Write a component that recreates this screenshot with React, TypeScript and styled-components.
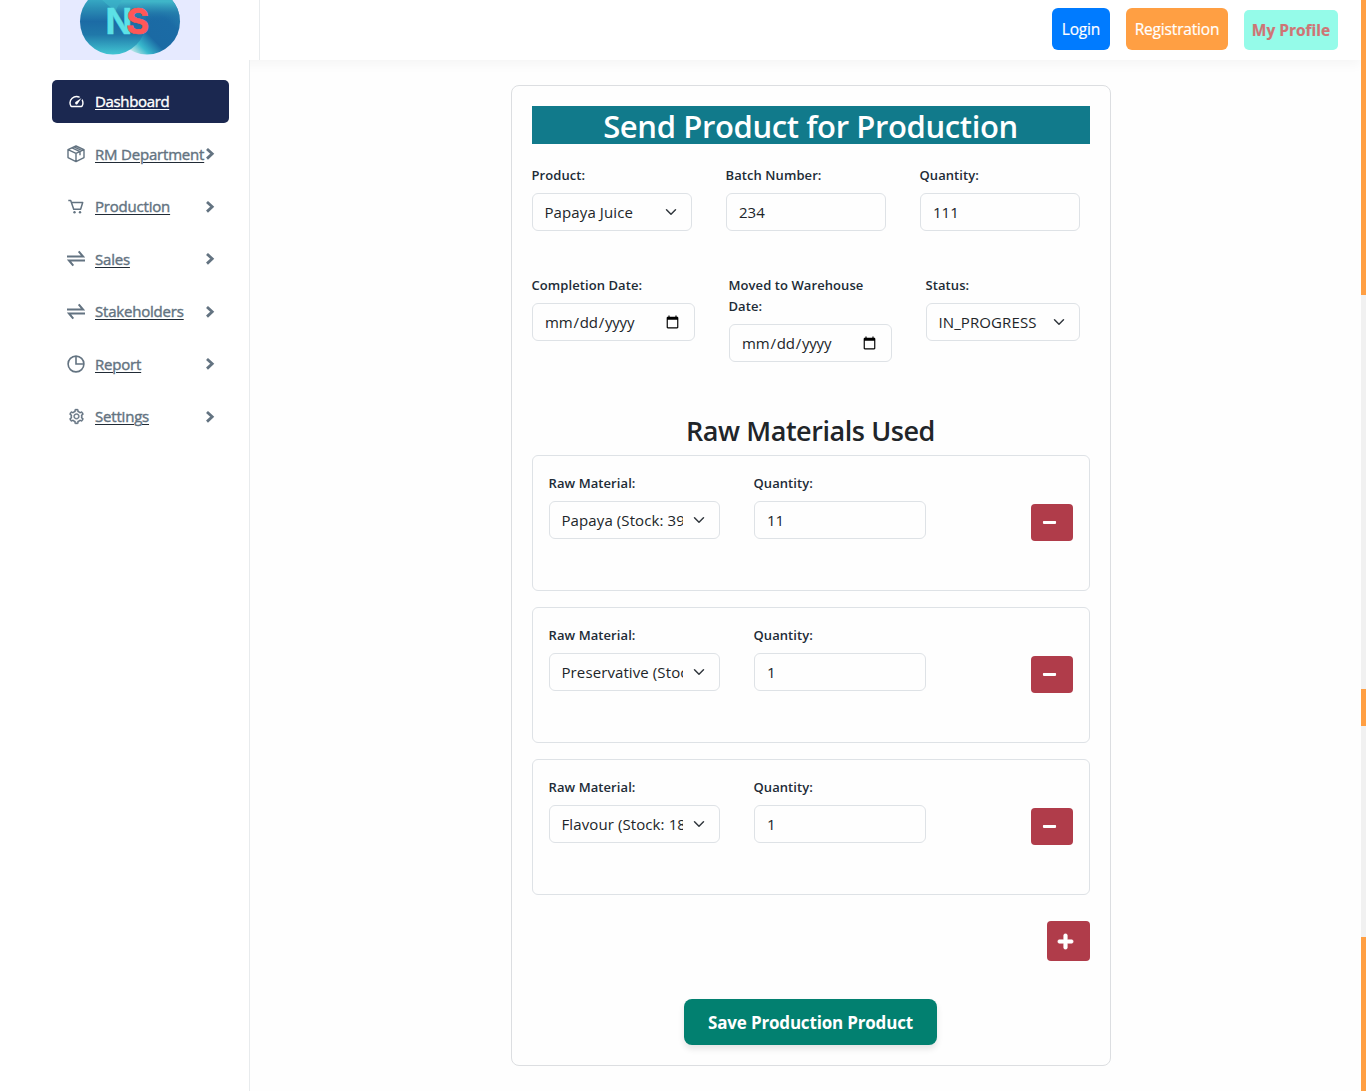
import React from "react";
import styled, { createGlobalStyle } from "styled-components";
import { MdOutlineSpeed } from "react-icons/md";
import { AiOutlineSetting } from "react-icons/ai";
import { FaMinus, FaPlus } from "react-icons/fa";

const GlobalStyle = createGlobalStyle`
  *, *::before, *::after { box-sizing: border-box; }
  body { margin: 0; background: #fefefe; color: #212529; font: 16px/1.5 "Open Sans", "Noto Sans", sans-serif; overflow: hidden; }
  h2, h3 { margin: 0; }
  button, input, select { font-family: inherit; }
`;

const Page = styled.div`display: grid; grid-template-columns: 1fr 5px; height: 1091px;`;
const Shell = styled.div`display: grid; grid-template-rows: 60px 1fr; min-width: 0;`;
const Header = styled.header`
  display: flex; background: #fff; box-shadow: 0 4px 12px rgba(0, 0, 0, 0.04);
`;
const LogoArea = styled.div`width: 260px; padding-left: 60px; border-right: 1px solid #e8ebed; overflow: hidden;`;
const Logo = styled.svg`display: block; background: #e6eaff;`;
const HeaderActions = styled.div`flex: 1; display: flex; justify-content: flex-end; padding: 8px 23px 10px 0;`;
const HeaderButton = styled.button<{ $bg: string; $w: number }>`
  width: ${(p) => p.$w}px; margin-right: 16px; padding: 0; border: 0; border-radius: 6px; background: ${(p) => p.$bg};
  color: #fff; font-size: 15.5px; letter-spacing: -0.18px; white-space: nowrap; -webkit-text-stroke: 0.2px currentColor;
`;
const ProfileButton = styled(HeaderButton)`
  margin: 2px 0 0; border-radius: 5px; color: #cf7475; font-weight: 700; letter-spacing: 0;
`;
const Body = styled.div`display: grid; grid-template-columns: 250px 1fr;`;
const Sidebar = styled.aside`
  position: relative; background: #fff; border-right: 1px solid #e8ebed; padding: 20px 20px 0 52px;
`;
const Menu = styled.nav`display: flex; flex-direction: column; gap: 9.5px;`;
const MenuLink = styled.a<{ $active?: boolean }>`
  display: flex; align-items: center; height: 43px; padding: 0 14.500px 0 15px; border-radius: 5px;
  color: ${(p) => (p.$active ? "#fff" : "#637381")}; background: ${(p) => (p.$active ? "#1b2850" : "transparent")};
  font-size: 15px; letter-spacing: ${(p) => (p.$active ? "-0.35px" : "-0.2px")};
  & > svg { flex: none; }
`;
const MenuIcon = styled.span`display: grid; place-items: center; flex: none; width: 18px; height: 18px; margin-right: 10px;`;
const MenuText = styled.span<{ $active?: boolean }>`
  flex: 1; min-width: 0; white-space: nowrap; text-decoration: underline; text-decoration-color: ${(p) => (p.$active ? "#fff" : "#212b36")};
  text-underline-offset: 2px; text-decoration-thickness: 1px;
  -webkit-text-stroke: 0.4px currentColor;
`;
const Main = styled.main`padding: 25px 0 0 261px;`;
const Card = styled.form`
  width: 600px; height: 981px; padding: 20px; border: 1px solid #dcdee1; border-radius: 8px;
  display: flex; flex-direction: column;
`;
const Title = styled.h2`
  height: 38px; padding-right: 1px; background: #117a8b; color: #fff; text-align: center; font-size: 31px; line-height: 41px;
  font-weight: 600; letter-spacing: -0.38px;
`;
const FieldRow = styled.div<{ $cols: string; $h: number; $top?: number }>`
  display: grid; grid-template-columns: ${(p) => p.$cols}; column-gap: 34px; align-items: start;
  height: ${(p) => p.$h}px; padding-top: ${(p) => p.$top ?? 0}px;
`;
const Field = styled.label`display: flex; flex-direction: column; gap: 7px; min-width: 0; padding-top: 1px;`;
const LabelText = styled.span`font-size: 13px; line-height: 21px; font-weight: 600; color: #212b36; letter-spacing: 0.08px; margin-left: -0.5px;`;
const Input = styled.input`
  width: 100%; height: 38px; padding: 6px 12px; border: 1px solid #dee2e6; border-radius: 6px; background: transparent;
  color: #212529; font-size: 15px; line-height: 24px; letter-spacing: 0;
  &[type="date"] { padding-left: 11px; padding-right: 12px; letter-spacing: -0.2px; }
`;
const Select = styled.select`
  width: 100%; height: 38px; padding: 6px 36px 6px 11.5px; border: 1px solid #dee2e6; border-radius: 6px; appearance: none;
  color: #212529; font-size: 15px; line-height: 24px; letter-spacing: 0.1px;
  background: transparent url("data:image/svg+xml,%3csvg xmlns='http://www.w3.org/2000/svg' viewBox='0 0 16 16'%3e%3cpath fill='none' stroke='%23343a40' stroke-linecap='round' stroke-linejoin='round' stroke-width='2' d='m2 5 6 6 6-6'/%3e%3c/svg%3e") no-repeat right 12px center / 16px 12px;
`;
const Subtitle = styled.h3`
  height: 42px; padding-right: 1px; line-height: 36px; text-align: center; font-size: 27px; font-weight: 600; letter-spacing: -0.44px;
`;
const Materials = styled.div`display: flex; flex-direction: column; gap: 16px;`;
const Material = styled.div`
  display: grid; grid-template-columns: 171px 172px 1fr; column-gap: 34px; align-items: start;
  height: 136px; padding: 16px; border: 1px solid #dee2e6; border-radius: 6px;
`;
const IconButton = styled.button<{ $w: number; $h: number }>`
  display: flex; align-items: center; align-self: flex-end; width: ${(p) => p.$w}px; height: ${(p) => p.$h}px;
  padding: 0 0 0 11px; border: 0; border-radius: 4px; background: #b03c4a; color: #fff;
`;
const RemoveButton = styled(IconButton)`align-self: start; justify-self: end; margin-top: 32px;`;
const AddButton = styled(IconButton)`margin-top: 26px; padding-left: 10px;`;
const SaveButton = styled.button`
  width: 253px; height: 46px; margin: 38px 0 0 152px; border: 0; border-radius: 8px; background: #028070; color: #fff;
  font-size: 17px; font-weight: 700; letter-spacing: -0.18px; box-shadow: 0 4px 6px rgba(0, 0, 0, 0.1); white-space: nowrap; padding: 0;
`;
const Track = styled.div`display: grid; grid-template-rows: 295px 394px 37px 211px 1fr; background: #f1f1f1;`;
const Thumb = styled.div<{ $row: number }>`grid-row: ${(p) => p.$row}; background: #ff9f43;`;

const PieIcon = () => (
  <svg width="18" height="18" viewBox="0 0 18 18" fill="none" stroke="currentColor" strokeWidth="1.6">
    <circle cx="9" cy="9" r="7.9" /><path d="M9 1v8h8" />
  </svg>
);
const BoxIcon = () => (
  <svg width="18" height="18" viewBox="0 0 18 18" fill="none" stroke="currentColor" strokeWidth="1.4" strokeLinejoin="round">
    <path d="M9 1 17 4.600v8L9 16.600 1 12.600v-8zM1 4.600l8 3.800 8-3.800M9 8.400v8.200M5 2.900l8 3.700v3.600M7 1.900l8 3.700" />
  </svg>
);
const CartIcon = () => (
  <svg width="18" height="18" viewBox="0 0 18 18" fill="none" stroke="currentColor" strokeWidth="1.5" strokeLinejoin="round">
    <path d="M1.300 2.600H3.700L6.700 11.200H14.200M4.400 4.500H15.700L13.700 11" />
    <circle cx="7.500" cy="14.300" r="1.200" fill="currentColor" stroke="none" />
    <circle cx="13" cy="14.300" r="1.200" fill="currentColor" stroke="none" />
  </svg>
);
const SwapIcon = () => (
  <svg width="18" height="18" viewBox="0 0 18 18" fill="none" stroke="currentColor" strokeWidth="2">
    <path d="M0 6.500H16L11.700 1.300M18 10.500H2L6.300 15.700" />
  </svg>
);
const Chevron = () => (
  <svg width="10" height="12" viewBox="0 0 10 12" fill="none" stroke="currentColor" strokeWidth="2.8">
    <path d="M2 1 7.200 5.800 2 10.600" />
  </svg>
);

const menu = [
  { text: "Dashboard", icon: <MdOutlineSpeed size={17} />, active: true },
  { text: "RM Department", icon: <BoxIcon /> },
  { text: "Production", icon: <CartIcon /> },
  { text: "Sales", icon: <SwapIcon /> },
  { text: "Stakeholders", icon: <SwapIcon /> },
  { text: "Report", icon: <PieIcon /> },
  { text: "Settings", icon: <AiOutlineSetting size={17} stroke="currentColor" strokeWidth={22} /> },
];

const materials = [
  { name: "Papaya (Stock: 39)", qty: "11" },
  { name: "Preservative (Stock: 9)", qty: "1" },
  { name: "Flavour (Stock: 18)", qty: "1" },
];

function BrandLogo() {
  return (
    <Logo width="140" height="60" viewBox="0 0 140 60">
      <defs>
        <linearGradient id="left" x1="0" y1="0" x2="0" y2="1">
          <stop offset="0" stopColor="#45c9d6" /><stop offset="0.3" stopColor="#2b8fb5" /><stop offset="0.5" stopColor="#1c6ba5" />
          <stop offset="0.7" stopColor="#2078a9" /><stop offset="1" stopColor="#42c6d3" />
        </linearGradient>
        <linearGradient id="right" gradientUnits="userSpaceOnUse" x1="72" y1="54" x2="115" y2="11">
          <stop offset="0" stopColor="#d8efec" /><stop offset="0.2" stopColor="#38b9cd" />
          <stop offset="0.42" stopColor="#1b6aa4" /><stop offset="0.8" stopColor="#1b6ba5" /><stop offset="1" stopColor="#247cac" />
        </linearGradient>
        <linearGradient id="rightTop" x1="0" y1="0" x2="0" y2="1">
          <stop offset="0.2" stopColor="#3fb5c8" /><stop offset="0.36" stopColor="#2681ae" stopOpacity="0.8" />
          <stop offset="0.5" stopColor="#1b6ba5" stopOpacity="0" />
        </linearGradient>
      </defs>
      <circle cx="87" cy="21.500" r="33" fill="url(#right)" />
      <circle cx="53" cy="21.500" r="33" fill="url(#left)" />
      <path d="M42 0H63Q58 5 56 12Z" fill="#3fb9cb" opacity="0.6" />
      <circle cx="87" cy="21.500" r="33" fill="url(#rightTop)" />
      <text y="34" fontFamily="Inter" fontWeight="700" fontSize="35">
        <tspan x="45.500" fill="#5ce1e6" stroke="#5ce1e6" strokeWidth="0.4">N</tspan>
        <tspan x="66.300" fill="#ff5757" stroke="#ff5757" strokeWidth="0.6">S</tspan>
      </text>
    </Logo>
  );
}

function SelectField({ label, value }: { label: string; value: string }) {
  return <Field><LabelText>{label}</LabelText><Select defaultValue={value}><option>{value}</option></Select></Field>;
}
function InputField({ label, value, type = "text" }: { label: string; value?: string; type?: string }) {
  return <Field><LabelText>{label}</LabelText><Input type={type} defaultValue={value} /></Field>;
}

export default function App() {
  return (
    <Page>
      <GlobalStyle />
      <Shell>
        <Header>
          <LogoArea><BrandLogo /></LogoArea>
          <HeaderActions>
            <HeaderButton $bg="#007bff" $w={58}>Login</HeaderButton>
            <HeaderButton $bg="#ff9f43" $w={102}>Registration</HeaderButton>
            <ProfileButton $bg="#95fbe9" $w={94}>My Profile</ProfileButton>
          </HeaderActions>
        </Header>
        <Body>
          <Sidebar>
            <Menu>
              {menu.map((m) => (
                <MenuLink key={m.text} $active={m.active}>
                  <MenuIcon>{m.icon}</MenuIcon>
                  <MenuText $active={m.active}>{m.text}</MenuText>
                  {!m.active && <Chevron />}
                </MenuLink>
              ))}
            </Menu>
          </Sidebar>
          <Main>
            <Card>
              <Title>Send Product for Production</Title>
              <FieldRow $cols="160px 160px 160px" $h={130} $top={20}>
                <SelectField label="Product:" value="Papaya Juice" />
                <InputField label="Batch Number:" value="234" />
                <InputField label="Quantity:" value="111" />
              </FieldRow>
              <FieldRow $cols="163px 163px 154px" $h={139}>
                <InputField label="Completion Date:" type="date" />
                <InputField label="Moved to Warehouse Date:" type="date" />
                <SelectField label="Status:" value="IN_PROGRESS" />
              </FieldRow>
              <Subtitle>Raw Materials Used</Subtitle>
              <Materials>
                {materials.map((m) => (
                  <Material key={m.name}>
                    <SelectField label="Raw Material:" value={m.name} />
                    <InputField label="Quantity:" value={m.qty} />
                    <RemoveButton type="button" $w={42} $h={37}><FaMinus size={15} /></RemoveButton>
                  </Material>
                ))}
              </Materials>
              <AddButton type="button" $w={43} $h={40}><FaPlus size={17} stroke="currentColor" strokeWidth={28} /></AddButton>
              <SaveButton type="button">Save Production Product</SaveButton>
            </Card>
          </Main>
        </Body>
      </Shell>
      <Track><Thumb $row={1} /><Thumb $row={3} /><Thumb $row={5} /></Track>
    </Page>
  );
}
